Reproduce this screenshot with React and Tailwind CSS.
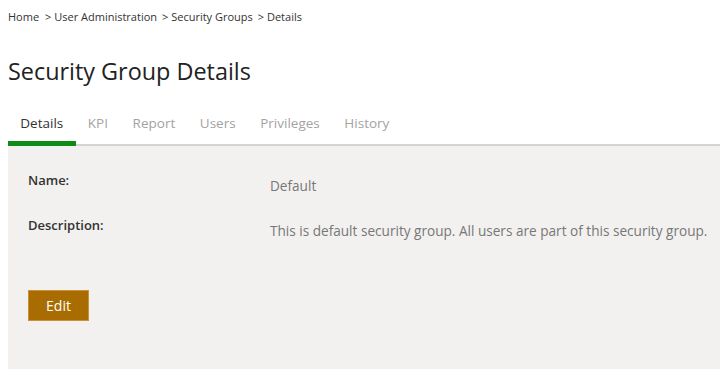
export default function App() {
  const tabs = ["Details", "KPI", "Report", "Users", "Privileges", "History"];
  return (
    <div className="w-[720px] h-[369px] bg-white overflow-hidden" style={{ fontFamily: '"Open Sans", "Noto Sans", sans-serif' }}>
      <div className="pl-[8px] pt-[9px] text-[11px] leading-[16px] text-[#333] flex">
        <span>Home</span>
        <span className="ml-[6px]">&gt; User Administration</span>
        <span className="ml-[5px]">&gt; Security Groups</span>
        <span className="ml-[5px]">&gt; Details</span>
      </div>
      <h1 className="pl-[8px] mt-[31px] text-[23.4px] leading-[30px] text-[#222] font-normal">Security Group Details</h1>
      <div className="mt-[27px] ml-[8px] flex border-b-2 border-[#d4d4d4] text-[13.5px] leading-[20px]">
        {tabs.map((t, i) => (
          <div
            key={t}
            className={
              i === 0
                ? "px-[12.3px] pb-[6px] -mb-[2px] border-b-[5px] border-[#0e8a16] text-[#333]"
                : "px-[12.3px] pb-[11px] text-[#a3a3a3]"
            }
          >
            {t}
          </div>
        ))}
      </div>
      <div className="ml-[8px] h-[230px] bg-[#f2f1f0] pl-[20px] pt-[24px]">
        <div className="flex text-[13px]">
          <div className="w-[242px] font-semibold text-[#333] leading-[20px]">Name:</div>
          <div className="pt-[6px] text-[#777] text-[13.6px] leading-[20px]">Default</div>
        </div>
        <div className="flex text-[13px] mt-[19px]">
          <div className="w-[242px] font-semibold text-[#333] leading-[20px]">Description:</div>
          <div className="pt-[6px] text-[#777] text-[13.6px] leading-[20px]">This is default security group. All users are part of this security group.</div>
        </div>
        <button className="mt-[49px] w-[61px] h-[31px] bg-[#a86c00] text-white text-[14px] border border-[#c9923a]">Edit</button>
      </div>
    </div>
  );
}
